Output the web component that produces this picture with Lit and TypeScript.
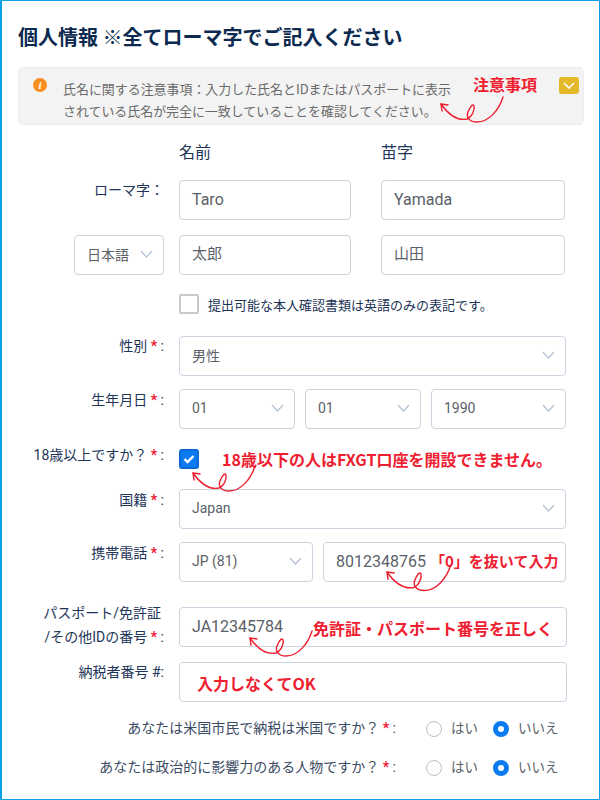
import { LitElement, html, css, svg } from "lit";
import { customElement } from "lit/decorators.js";

const chev = html`<svg class="chev" width="13" height="8" viewBox="0 0 13 8"><polyline points="1,1 6.5,7 12,1" fill="none" stroke="#b4c0d4" stroke-width="1.2"/></svg>`;

const sel = (t: string, cls = "") => html`<div class="field sel ${cls}"><span>${t}</span>${chev}</div>`;
const star = html`<b class="star">*</b>`;

const radio = (on: boolean, t: string) => html`<span class="opt"><i class="radio ${on ? "on" : ""}"></i><span class="rt">${t}</span></span>`;

const curl = (x: number, y: number, s = 1) => svg`<g transform="translate(${x} ${y}) scale(${s})" fill="none" stroke="#ee2030" stroke-width="1.4" stroke-linecap="round">
  <path d="M62 -7 C58 6 48 18 36 18 C28 18 25 13 27 8 C29 3 32 -1 33 2 C34 6 31 13 26 15 C16 17 7 10 0 0"/>
  <path d="M0 0 L1 7 M0 0 L7 1"/></g>`;

@customElement("app-root")
export class AppRoot extends LitElement {
  static styles = css`
    :host { display: block; width: 600px; height: 800px; }
    * { box-sizing: border-box; }
    .page { position: relative; width: 600px; height: 800px; overflow: hidden; background: #fff;
      border: 1px solid #0aa0e6; border-left-width: 2px; border-right-width: 1px; color: #1d3557;
      font-family: Roboto, "Noto Sans CJK JP", sans-serif; font-size: 14px; padding: 0 33px 0 16px; }
    h1 { margin: 23px 0 0; font-size: 20px; line-height: 26px; font-weight: 700; color: #0c2a50; font-family: "Noto Sans CJK JP", sans-serif; white-space: nowrap; }
    .alert { display: flex; margin: 17px -18px 0 0; height: 58px; background: #f3f3f3; border: 1px solid #eeeeee; border-radius: 5px; padding: 10px 4px 0 14px; }
    .info { width: 14px; height: 14px; border-radius: 50%; background: #f78f1e; color: #fff; font: italic 700 11px/14px "Liberation Serif", serif; text-align: center; flex: none; }
    .atext { margin-left: 16px; width: 410px; font-size: 12.95px; line-height: 22px; color: #6a6a6a; font-family: "Noto Sans CJK JP", sans-serif; white-space: nowrap; }
    .toggle { margin-left: auto; margin-top: -1px; width: 20px; height: 17px; background: #e3b92a; border-radius: 3px; display: flex; align-items: center; justify-content: center; }
    .row { display: grid; grid-template-columns: 146px 1fr; column-gap: 15px; }
    .lab { text-align: right; font-size: 14px; line-height: 20px; padding-top: 0; color: #1d3557; white-space: nowrap; }
    .star { color: #f0142f; font-weight: 700; font-family: Roboto, sans-serif; }
    .cols { display: flex; gap: 10px; }
    .field { height: 40px; border: 1px solid #ccd3df; border-radius: 4px; background: #fff; display: flex; align-items: center; padding: 0 11px 2px 12px; font-size: 14px; color: #5a5f68; white-space: nowrap; }
    .input { font-size: 16px; }
    .input.cjk { font-size: 15px; padding-bottom: 5px; }
    .sel { justify-content: space-between; }
    .chev { flex: none; margin-right: -1px; }
    .heads { margin-top: 16px; height: 24px; }
    .heads span { font-size: 16px; line-height: 24px; color: #1d3557; }
    .names { display: flex; gap: 30px; }
    .names > * { flex: none; }
    .w172 { width: 172px; }
    .w184 { width: 184px; }
    .check { display: flex; align-items: center; gap: 9px; font-size: 13px; color: #1d3557; }
    .cb { width: 20px; height: 20px; border: 2px solid #c9c9c9; border-radius: 2px; flex: none; background: #fff; }
    .cb.on { background: #0a7bf0; border-color: #0a6ad8; border-radius: 3px; display: flex; align-items: center; justify-content: center; }
    .grow { flex: 1; min-width: 0; }
    .qrow { display: flex; height: 20px; align-items: center; }
    .q { width: 378px; text-align: right; font-size: 14px; white-space: nowrap; color: #3a4a63; position: relative; top: -2px; }
    .opts { display: flex; margin-left: 30px; }
    .opt { display: flex; align-items: center; gap: 9px; font-size: 13.5px; color: #5a5f68; }
    .opt + .opt { margin-left: 15px; }
    .rt { position: relative; top: -2px; }
    .radio { display: block; width: 16px; height: 16px; border-radius: 50%; border: 1px solid #b9bfc8; background: #fff; }
    .radio.on { border: 5px solid #0a7bf0; }
    .note { position: absolute; color: #ee2030; font-weight: 700; font-size: 16px; line-height: 22px; font-family: "Noto Sans CJK JP", sans-serif; white-space: nowrap; }
    .curls { position: absolute; left: -2px; top: -1px; width: 600px; height: 800px; pointer-events: none; }
    .up4 { margin-top: -4px; }
    .dn1 { padding-top: 1px; }
    .pass { line-height: 24px; margin: -6px 0 -4px; }
    .pass span { margin-right: 3px; }
  `;

  render() {
    return html`<div class="page" lang="ja">
      <h1>個人情報 ※全てローマ字でご記入ください</h1>
      <div class="alert">
        <div class="info">i</div>
        <div class="atext">氏名に関する注意事項：入力した氏名とIDまたはパスポートに表示<br>されている氏名が完全に一致していることを確認してください。</div>
        <div class="toggle"><svg width="12" height="7" viewBox="0 0 12 7"><polyline points="1,1 6,6 11,1" fill="none" stroke="#fff" stroke-width="1.6"/></svg></div>
      </div>

      <div class="row heads"><div></div><div class="names"><span class="w172">名前</span><span>苗字</span></div></div>

      <div class="row" style="margin-top:15px"><div class="lab">ローマ字：</div>
        <div class="names"><div class="field input w172">Taro</div><div class="field input w184">Yamada</div></div></div>

      <div class="row" style="margin-top:15px"><div style="display:flex;justify-content:flex-end"><div class="field sel" style="width:90px">日本語 ${chev}</div></div>
        <div class="names"><div class="field input cjk w172">太郎</div><div class="field input cjk w184">山田</div></div></div>

      <div class="row" style="margin-top:19px"><div></div><div class="check"><i class="cb"></i>提出可能な本人確認書類は英語のみの表記です。</div></div>

      <div class="row" style="margin-top:22px"><div class="lab">性別 ${star} :</div>${sel("男性")}</div>

      <div class="row" style="margin-top:13px"><div class="lab dn1">生年月日 ${star} :</div>
        <div class="cols"><div style="width:116px">${sel("01")}</div><div style="width:116px">${sel("01")}</div><div class="grow">${sel("1990")}</div></div></div>

      <div class="row" style="margin-top:20px"><div class="lab up4">18歳以上ですか？ ${star} :</div>
        <div><i class="cb on"><svg width="12" height="10" viewBox="0 0 12 10"><polyline points="1.5,5 4.5,8 10.5,2" fill="none" stroke="#fff" stroke-width="2.4"/></svg></i></div></div>

      <div class="row" style="margin-top:20px"><div class="lab dn1">国籍 ${star} :</div>${sel("Japan")}</div>

      <div class="row" style="margin-top:13px"><div class="lab dn1">携帯電話 ${star} :</div>
        <div class="cols"><div style="width:134px">${sel("JP (81)")}</div><div class="field input grow">8012348765</div></div></div>

      <div class="row" style="margin-top:25px"><div class="lab pass"><span>パスポート/免許証</span><br>/その他IDの番号 ${star} :</div>
        <div class="field input" style="margin-right:-1px">JA12345784</div></div>

      <div class="row" style="margin-top:15px"><div class="lab">納税者番号 #:</div><div class="field" style="margin-right:-1px"></div></div>

      <div class="qrow" style="margin-top:17px"><div class="q">あなたは米国市民で納税は米国ですか？ ${star} :</div><div class="opts">${radio(false, "はい")}${radio(true, "いいえ")}</div></div>
      <div class="qrow" style="margin-top:19px"><div class="q">あなたは政治的に影響力のある人物ですか？ ${star} :</div><div class="opts">${radio(false, "はい")}${radio(true, "いいえ")}</div></div>

      <span class="note" style="left:471px;top:72px">注意事項</span>
      <span class="note" style="left:220px;top:447px">18歳以下の人はFXGT口座を開設できません。</span>
      <span class="note" style="left:428px;top:549px;font-size:15px;font-feature-settings:'chws' 0">「0」を抜いて入力</span>
      <span class="note" style="left:311px;top:616px">免許証・パスポート番号を正しく</span>
      <span class="note" style="left:195px;top:671px">入力しなくてOK</span>
      <svg class="curls" viewBox="0 0 600 800">${curl(441, 104)}${curl(193, 473)}${curl(387, 572, 1.03)}${curl(250, 638)}</svg>
    </div>`;
  }
}
